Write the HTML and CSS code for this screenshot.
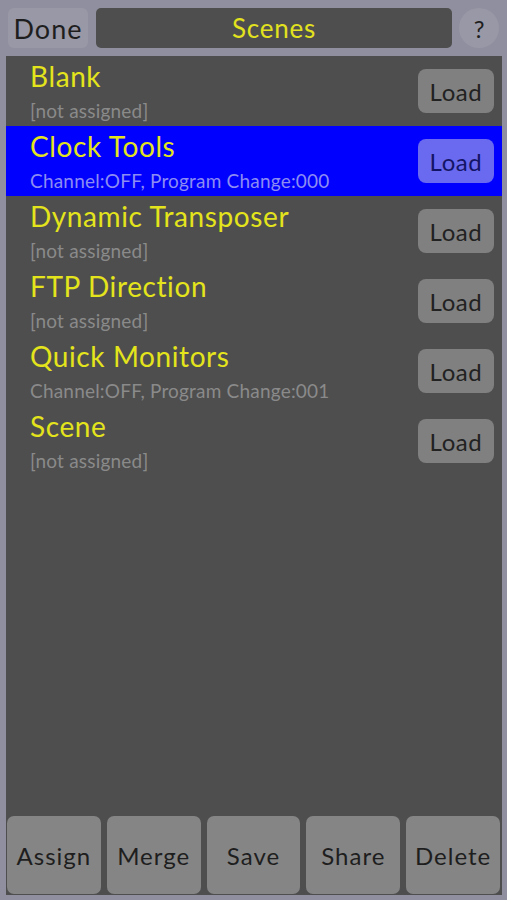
FILE: index.html
```html
<!DOCTYPE html>
<html>
<head>
<meta charset="utf-8">
<link rel="stylesheet" href="styles.css">
</head>
<body>
<div class="topbar">
  <div class="done">Done</div>
  <div class="title">Scenes</div>
  <div class="help">?</div>
</div>
<div class="panel">
  <div class="list">
    <div class="row">
      <div class="info"><div class="name">Blank</div><div class="sub">[not assigned]</div></div>
      <div class="load">Load</div>
    </div>
    <div class="row selected">
      <div class="info"><div class="name">Clock Tools</div><div class="sub">Channel:OFF, Program Change:000</div></div>
      <div class="load">Load</div>
    </div>
    <div class="row">
      <div class="info"><div class="name">Dynamic Transposer</div><div class="sub">[not assigned]</div></div>
      <div class="load">Load</div>
    </div>
    <div class="row">
      <div class="info"><div class="name">FTP Direction</div><div class="sub">[not assigned]</div></div>
      <div class="load">Load</div>
    </div>
    <div class="row">
      <div class="info"><div class="name">Quick Monitors</div><div class="sub">Channel:OFF, Program Change:001</div></div>
      <div class="load">Load</div>
    </div>
    <div class="row">
      <div class="info"><div class="name">Scene</div><div class="sub">[not assigned]</div></div>
      <div class="load">Load</div>
    </div>
  </div>
  <div class="actions">
    <div class="btn">Assign</div>
    <div class="btn">Merge</div>
    <div class="btn">Save</div>
    <div class="btn">Share</div>
    <div class="btn">Delete</div>
  </div>
</div>
</body>
</html>
```
FILE: styles.css
```css
html, body {
  margin: 0;
  padding: 0;
}
body {
  background: #8f8f9f;
  font-family: Lato, "Noto Sans", sans-serif;
  width: 507px;
  height: 900px;
  overflow: hidden;
}
.topbar {
  display: flex;
  align-items: center;
  padding: 8px 8px 0 8px;
  height: 40px;
}
.done {
  width: 80px;
  height: 40px;
  border-radius: 6px;
  background: #9898a6;
  color: #1e1e1e;
  font-size: 27px;
  letter-spacing: 1px;
  display: flex;
  align-items: center;
  justify-content: center;
}
.title {
  flex: 1;
  margin-left: 8px;
  height: 40px;
  border-radius: 5px;
  background: #4e4e4e;
  color: #e2e21e;
  font-size: 26px;
  letter-spacing: 0.8px;
  display: flex;
  align-items: center;
  justify-content: center;
}
.help {
  width: 40px;
  height: 40px;
  margin-left: 7px;
  border-radius: 50%;
  background: #9898a7;
  color: #1e1e1e;
  font-size: 24px;
  display: flex;
  align-items: center;
  justify-content: center;
}
.panel {
  margin: 8px 5px 0 6px;
  height: 839px;
  background: #4e4e4e;
  display: flex;
  flex-direction: column;
}
.list {
  flex: 1;
}
.row {
  height: 70px;
  box-sizing: border-box;
  display: flex;
  align-items: flex-start;
  padding: 4px 8px 0 24px;
}
.row.selected {
  background: #0000fe;
}
.info {
  flex: 1;
}
.name {
  color: #e4e41c;
  font-size: 28px;
  line-height: 32px;
  letter-spacing: 0.6px;
}
.sub {
  color: #8a8a8a;
  font-size: 19px;
  line-height: 24px;
  margin-top: 7px;
  letter-spacing: 0.2px;
}
.selected .sub {
  color: #8c8cf2;
}
.load {
  align-self: center;
  margin-top: -4px;
  width: 76px;
  height: 44px;
  border-radius: 8px;
  background: #808080;
  color: #222222;
  font-size: 24px;
  letter-spacing: 0.6px;
  display: flex;
  align-items: center;
  justify-content: center;
}
.selected .load {
  background: #6a6af0;
  color: #141466;
}
.actions {
  display: grid;
  grid-template-columns: repeat(5, 1fr);
  gap: 6px;
  padding: 0 2px 1px 1px;
  height: 78px;
}
.btn {
  background: #858585;
  border-radius: 7px;
  color: #1e1e1e;
  font-size: 24px;
  letter-spacing: 1px;
  display: flex;
  align-items: center;
  justify-content: center;
}
```
